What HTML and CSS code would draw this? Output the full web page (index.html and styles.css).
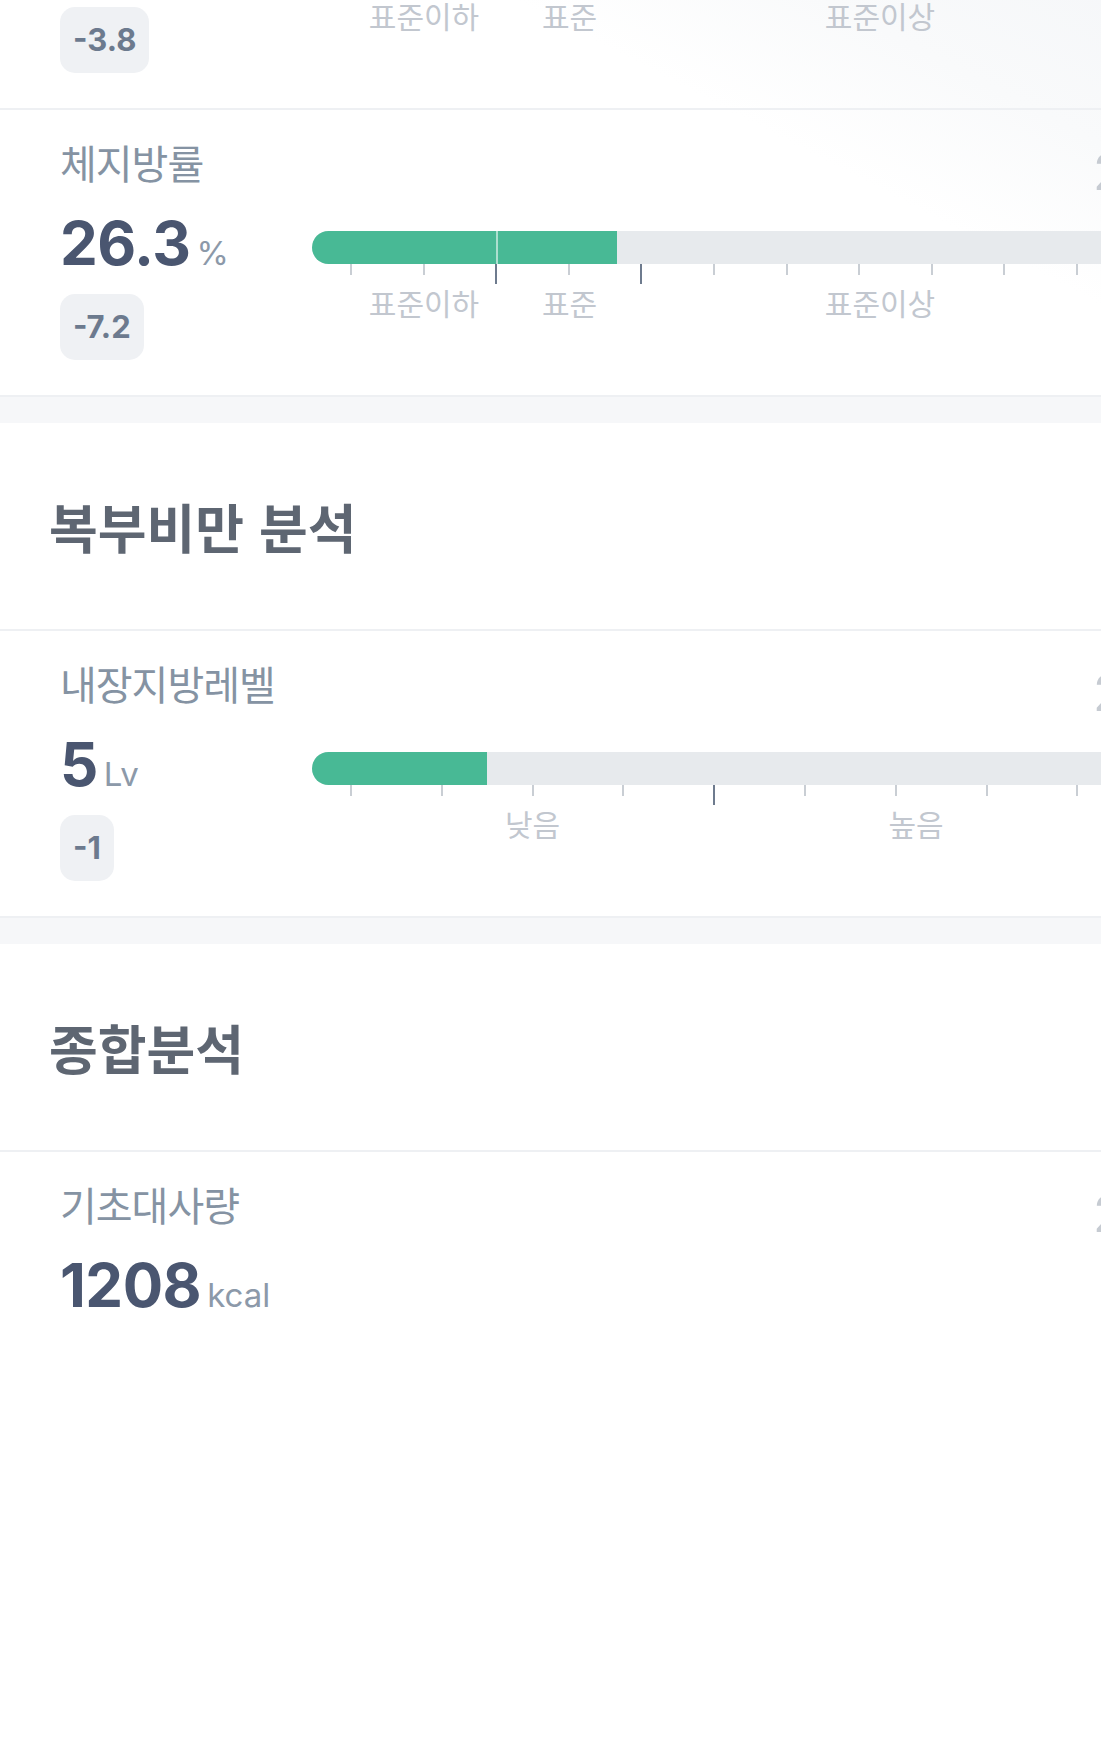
FILE: index.html
```html
<!DOCTYPE html>
<html lang="ko">
<head>
    <meta charset="UTF-8">
    <meta name="viewport" content="width=device-width, initial-scale=1.0">
    <title>체성분 분석</title>

    <link rel="stylesheet" href="styles.css">
</head>
<body>
    <div class="page">

        <div class="sheen">
            <!-- 골격근량 (위로 스크롤된 카드) -->
            <div class="card card-first">
                <div class="card-title">골격근량</div>
                <span class="card-side">2</span>
                <div class="card-body">
                    <div class="card-left">
                        <div class="value">22.4<span class="unit">kg</span></div>
                        <div class="badge">-3.8</div>
                    </div>
                    <div class="scale">
                        <div class="bar">
                            <div class="bar-fill" style="width: 230px"></div>
                            <div class="bar-split" style="left: 184px"></div>
                        </div>
                        <div class="ticks ticks-std">
                            <i></i><i></i><i class="major"></i><i></i><i class="major"></i><i></i><i></i><i></i><i></i><i></i><i></i>
                        </div>
                        <div class="labels">
                            <span style="width: 146px">표준이하</span>
                            <span style="width: 145px">표준</span>
                            <span style="width: 476px">표준이상</span>
                        </div>
                    </div>
                </div>
            </div>

            <!-- 체지방률 -->
            <div class="card">
                <div class="card-title">체지방률</div>
                <span class="card-side">2</span>
                <div class="card-body">
                    <div class="card-left">
                        <div class="value">26.3<span class="unit">%</span></div>
                        <div class="badge">-7.2</div>
                    </div>
                    <div class="scale">
                        <div class="bar">
                            <div class="bar-fill" style="width: 305px"></div>
                            <div class="bar-split" style="left: 184px"></div>
                        </div>
                        <div class="ticks ticks-std">
                            <i></i><i></i><i class="major"></i><i></i><i class="major"></i><i></i><i></i><i></i><i></i><i></i><i></i>
                        </div>
                        <div class="labels">
                            <span style="width: 146px">표준이하</span>
                            <span style="width: 145px">표준</span>
                            <span style="width: 476px">표준이상</span>
                        </div>
                    </div>
                </div>
            </div>
        </div>

        <div class="band"></div>

        <div class="section-head">
            <h2>복부비만 분석</h2>
        </div>

        <!-- 내장지방레벨 -->
        <div class="card">
            <div class="card-title">내장지방레벨</div>
            <span class="card-side">2</span>
            <div class="card-body">
                <div class="card-left">
                    <div class="value">5<span class="unit">Lv</span></div>
                    <div class="badge">-1</div>
                </div>
                <div class="scale">
                    <div class="bar">
                        <div class="bar-fill" style="width: 175px"></div>
                    </div>
                    <div class="ticks ticks-lv">
                        <i></i><i></i><i></i><i></i><i class="major"></i><i></i><i></i><i></i><i></i>
                    </div>
                    <div class="labels">
                        <span style="width: 363px">낮음</span>
                        <span style="width: 404px">높음</span>
                    </div>
                </div>
            </div>
        </div>

        <div class="band"></div>

        <div class="section-head">
            <h2>종합분석</h2>
        </div>

        <!-- 기초대사량 -->
        <div class="card card-last">
            <div class="card-title">기초대사량</div>
            <span class="card-side">2</span>
            <div class="card-body">
                <div class="card-left">
                    <div class="value">1208<span class="unit">kcal</span></div>
                </div>
            </div>
        </div>

    </div>
</body>
</html>
```

FILE: styles.css
```css
html, body {
    margin: 0;
    padding: 0;
    background-color: #fff;
    overflow-x: hidden;
}

body {
    font-family: "Noto Sans CJK KR", sans-serif;
    width: 1101px;
    min-height: 1737px;
}

.page {
    overflow: hidden;
}

.sheen {
    background: linear-gradient(to bottom left, #f2f4f7 0%, #f9fafb 28%, #fff 42%);
}

/* 카드 */
.card {
    position: relative;
    height: 287px;
    box-sizing: border-box;
    padding: 27px 0 0 60px;
    border-bottom: 2px solid #eef0f3;
}

.card-first {
    margin-top: -177px;
}

.card-last {
    border-bottom: none;
}

.card-title {
    font-size: 40px;
    line-height: 50px;
    letter-spacing: -1px;
    color: #8593a3;
}

.card-side {
    position: absolute;
    left: 1093px;
    top: 32px;
    font-family: Inter, sans-serif;
    font-size: 50px;
    line-height: 60px;
    color: #c6cbd2;
}

.card-body {
    display: flex;
    margin-top: 26px;
}

.card-left {
    flex: none;
    width: 252px;
}

.value {
    font-family: Inter, "Noto Sans CJK KR", sans-serif;
    font-weight: 700;
    font-size: 60px;
    line-height: 60px;
    letter-spacing: -0.5px;
    color: #4a5670;
    white-space: nowrap;
}

.unit {
    font-weight: 400;
    font-size: 33px;
    line-height: 1;
    letter-spacing: 0;
    margin-left: 6px;
    color: #8c99a9;
}

.badge {
    display: inline-block;
    margin-top: 21px;
    height: 66px;
    padding: 0 13px;
    border-radius: 15px;
    background-color: #eff1f4;
    font-family: Inter, sans-serif;
    font-weight: 700;
    font-size: 31px;
    line-height: 66px;
    color: #6c7a8e;
}

/* 막대 그래프 */
.scale {
    flex: none;
    width: 846px;
    padding-top: 18px;
}

.bar {
    position: relative;
    height: 33px;
    background-color: #e7eaed;
    border-radius: 17px 0 0 17px;
    overflow: hidden;
}

.bar-fill {
    height: 100%;
    background-color: #48b995;
}

.bar-split {
    position: absolute;
    top: 0;
    width: 2px;
    height: 100%;
    background-color: rgba(255, 255, 255, 0.55);
}

.ticks {
    display: flex;
    align-items: flex-start;
    height: 20px;
    padding-left: 38px;
}

.ticks-std {
    gap: 70.6px;
}

.ticks-lv {
    gap: 88.8px;
}

.ticks i {
    flex: none;
    width: 2px;
    height: 11px;
    background-color: #c9ced4;
}

.ticks i.major {
    height: 20px;
    background-color: #6e7b8e;
}

.labels {
    display: flex;
    padding-left: 39px;
}

.labels span {
    flex: none;
    text-align: center;
    font-size: 30px;
    line-height: 36px;
    color: #c2c7cf;
    white-space: nowrap;
}

/* 구분 영역 */
.band {
    height: 26px;
    background-color: #f6f7f9;
}

.section-head {
    display: flex;
    align-items: center;
    height: 208px;
    box-sizing: border-box;
    padding-left: 49px;
    border-bottom: 2px solid #eef0f3;
}

.section-head h2 {
    margin: 0;
    font-size: 53px;
    line-height: 50px;
    font-weight: 700;
    color: #5e6672;
}
```
